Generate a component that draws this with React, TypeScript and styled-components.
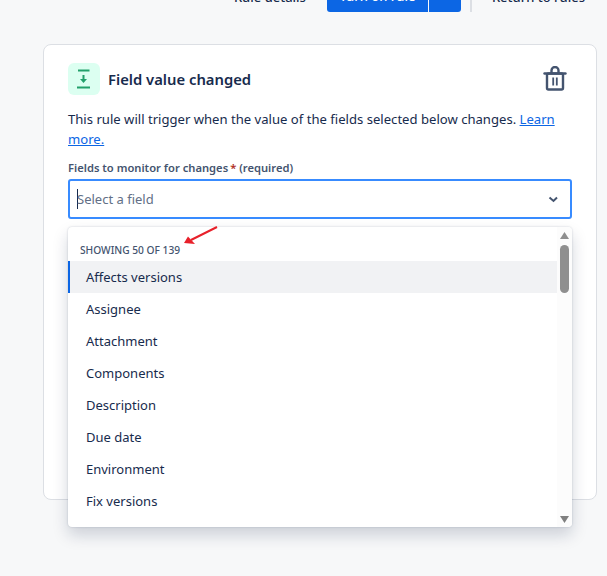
import React from "react";
import styled, { createGlobalStyle } from "styled-components";

const Global = createGlobalStyle`
  html, body { margin: 0; padding: 0; height: 576px; overflow: hidden; background: #f7f8f9; }
  body { font-family: "Noto Sans", "Open Sans", sans-serif; color: #172b4d; }
`;

const Page = styled.div`
  width: 607px;
  height: 576px;
  overflow: hidden;
  display: flex;
  flex-direction: column;
  background: #f7f8f9;
`;

const TopBar = styled.header`
  height: 12px;
  flex: none;
  display: flex;
  justify-content: flex-end;
  align-items: flex-end;
  padding-right: 22px;
  overflow: hidden;
`;

const GhostLabel = styled.span`
  font-size: 13px;
  line-height: 20px;
  font-weight: 500;
  white-space: nowrap;
  transform: translateY(-5px);
`;

const ActionButton = styled.div<{ $w: number; $side: "left" | "right" }>`
  width: ${(p) => p.$w}px;
  height: 32px;
  flex: none;
  background: #0c66e4;
  color: #fff;
  font-size: 13px;
  font-weight: 500;
  line-height: 33px;
  text-align: center;
  border-radius: ${(p) => (p.$side === "left" ? "0 0 0 3px" : "0 0 3px 0")};
`;

const SplitButton = styled.div`
  display: flex;
  gap: 1px;
  margin: 0 9px 0 21px;
`;

const Divider = styled.div`
  width: 2px;
  height: 12px;
  background: #dcdfe4;
  margin-right: 20px;
`;

const Card = styled.section`
  position: relative;
  box-sizing: border-box;
  width: 554px;
  height: 456px;
  margin: 32px 0 0 43px;
  padding: 18px 24px 0;
  background: #fff;
  border: 1px solid #dcdfe4;
  border-radius: 8px;
`;

const CardHead = styled.div`
  display: flex;
  align-items: center;
  gap: 8px;
  height: 32px;
`;

const IconTile = styled.div`
  width: 32px;
  height: 32px;
  border-radius: 6px;
  background: #dcfff1;
  display: flex;
  align-items: center;
  justify-content: center;
`;

const Title = styled.h2`
  flex: 1;
  margin: 0;
  font-size: 14.8px;
  font-weight: 600;
  line-height: 20px;
  color: #172b4d;
`;

const TrashButton = styled.div`
  display: flex;
  margin-right: 5px;
`;

const Description = styled.p`
  margin: 14px 0 0;
  font-size: 13.1px;
  line-height: 20px;
  color: #172b4d;
`;

const Learn = styled.a`
  color: #0c66e4;
  text-decoration: underline;
`;

const FieldLabel = styled.label`
  display: block;
  margin-top: 11px;
  font-size: 11.2px;
  line-height: 16px;
  font-weight: 600;
  color: #44546f;
`;

const Star = styled.span`
  color: #ae2e24;
  margin-left: 2px;
`;

const Select = styled.div`
  box-sizing: border-box;
  margin-top: 3px;
  height: 40px;
  border: 2px solid #388bff;
  border-radius: 3px;
  display: flex;
  align-items: center;
  padding: 0 9px 0 7px;
`;

const Placeholder = styled.span`
  flex: 1;
  font-size: 13px;
  color: #626f86;
  border-left: 1px solid #172b4d;
  text-indent: -1px;
  line-height: 20px;
`;

const Menu = styled.div`
  position: absolute;
  left: 24px;
  top: 182px;
  width: 504px;
  height: 300px;
  background: #fff;
  border-radius: 4px;
  box-shadow: 0 8px 16px rgba(9, 30, 66, 0.18), 0 0 2px rgba(9, 30, 66, 0.22);
  overflow: hidden;
  display: flex;
`;

const MenuList = styled.div`
  flex: 1;
  min-width: 0;
`;

const MenuHeading = styled.div`
  height: 34px;
  box-sizing: border-box;
  padding: 16px 0 0 12px;
  font-size: 10.2px;
  line-height: 14px;
  font-weight: 500;
  color: #44546f;
`;

const Option = styled.div<{ $active?: boolean }>`
  box-sizing: border-box;
  height: 32px;
  line-height: 32px;
  padding-left: 16px;
  font-size: 13px;
  color: #172b4d;
  background: ${(p) => (p.$active ? "#f1f2f4" : "transparent")};
  border-left: 2px solid ${(p) => (p.$active ? "#0c66e4" : "transparent")};
`;

const ScrollTrack = styled.div`
  width: 15px;
  flex: none;
  background: #fcfcfc;
  display: flex;
  flex-direction: column;
  align-items: center;
  padding-top: 5px;
`;

const ArrowGlyph = styled.svg<{ $down?: boolean }>`
  display: block;
  flex: none;
  margin-top: ${(p) => (p.$down ? "223px" : "0")};
`;

const Thumb = styled.div`
  width: 9px;
  height: 48px;
  margin-top: 6px;
  border-radius: 5px;
  background: #8f8f8f;
`;

const Annotation = styled.svg`
  position: absolute;
  left: 140px;
  top: 180px;
`;

const options = [
  "Affects versions",
  "Assignee",
  "Attachment",
  "Components",
  "Description",
  "Due date",
  "Environment",
  "Fix versions",
];

export default function App() {
  return (
    <Page>
      <Global />
      <TopBar>
        <GhostLabel>Rule details</GhostLabel>
        <SplitButton>
          <ActionButton $w={101} $side="left">Turn on rule</ActionButton>
          <ActionButton $w={32} $side="right" />
        </SplitButton>
        <Divider />
        <GhostLabel>Return to rules</GhostLabel>
      </TopBar>
      <Card>
        <CardHead>
          <IconTile>
            <svg width="32" height="32" viewBox="0 0 32 32" fill="none">
              <path d="M10 7.5h11.5M9 24.5h13" stroke="#22a06b" strokeWidth="2" />
              <path d="M15.5 12v5" stroke="#22a06b" strokeWidth="2" />
              <path d="M12 16h7l-3.5 4z" fill="#22a06b" />
            </svg>
          </IconTile>
          <Title>Field value changed</Title>
          <TrashButton>
            <svg width="24" height="26" viewBox="0 0 24 26" fill="none" stroke="#44546f" strokeWidth="2.4">
              <path d="M1.5 7.5h21" strokeLinecap="round" />
              <path d="M8.5 7V4.5a3.5 3.5 0 0 1 7 0V7" />
              <rect x="4" y="7.5" width="16" height="16" rx="1.5" />
              <path d="M10.2 11.5v8M13.8 11.5v8" strokeWidth="1.8" />
            </svg>
          </TrashButton>
        </CardHead>
        <Description>
          This rule will trigger when the value of the fields selected below changes. <Learn>Learn more.</Learn>
        </Description>
        <FieldLabel>
          Fields to monitor for changes<Star>*</Star> (required)
        </FieldLabel>
        <Select>
          <Placeholder>Select a field</Placeholder>
          <svg width="16" height="16" viewBox="0 0 16 16" fill="none">
            <path d="M4.5 6.5L8.5 10l3.5-3.5" stroke="#44546f" strokeWidth="2" />
          </svg>
        </Select>
        <Menu>
          <MenuList>
            <MenuHeading>SHOWING 50 OF 139</MenuHeading>
            {options.map((o, i) => (
              <Option key={o} $active={i === 0}>{o}</Option>
            ))}
          </MenuList>
          <ScrollTrack>
            <ArrowGlyph width="9" height="7" viewBox="0 0 9 7">
              <path d="M4.5 0L9 7H0z" fill="#8f8f8f" />
            </ArrowGlyph>
            <Thumb />
            <ArrowGlyph $down width="9" height="7" viewBox="0 0 9 7">
              <path d="M0 0h9L4.5 7z" fill="#808080" />
            </ArrowGlyph>
          </ScrollTrack>
        </Menu>
        <Annotation width="36" height="24" viewBox="0 0 36 24" fill="none">
          <path d="M33 2L7 15" stroke="#e8202a" strokeWidth="2" />
          <path d="M0 18L4 11.5L11 19z" fill="#e8202a" />
        </Annotation>
      </Card>
    </Page>
  );
}
